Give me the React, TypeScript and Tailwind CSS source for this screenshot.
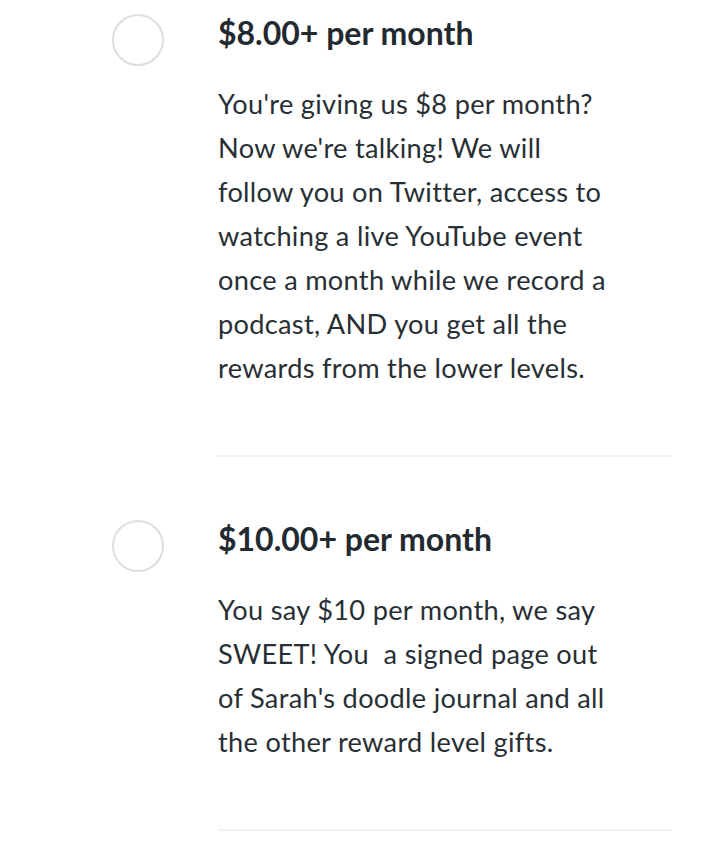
const tiers = [
  {
    title: '$8.00+ per month',
    body: "You're giving us $8 per month? Now we're talking! We will follow you on Twitter, access to watching a live YouTube event once a month while we record a podcast, AND you get all the rewards from the lower levels.",
  },
  {
    title: '$10.00+ per month',
    body: "You say $10 per month, we say SWEET! You\u00a0 a signed page out of Sarah's doodle journal and all the other reward level gifts.",
  },
];

export default function App() {
  return (
    <div className="min-h-screen bg-white pt-[13px] font-['Lato',sans-serif]">
      {tiers.map((t) => (
        <div key={t.title} className="flex pl-[112px]">
          <div className="pt-[1px]">
            <div className="w-[52px] h-[52px] rounded-full border-2 border-[#dadfe2]" />
          </div>
          <div className="ml-[54px] w-[454px]">
            <h2 className="text-[32px] leading-[40px] font-bold text-[#22292f]">{t.title}</h2>
            <p className="mt-[29px] w-[394px] text-[27.2px] leading-[44px] tracking-[0.3px] text-[#282f34]">{t.body}</p>
            <div className="mt-[65px] mb-[62px] h-[2px] bg-[#eef1f1]" />
          </div>
        </div>
      ))}
    </div>
  );
}
